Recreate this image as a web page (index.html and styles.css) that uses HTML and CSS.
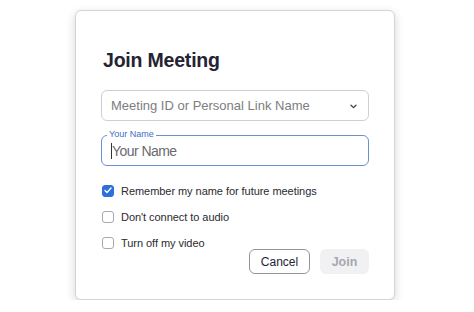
FILE: index.html
```html
<!DOCTYPE html>
<html lang="en">
<head>
<meta charset="utf-8">
<title>Join Meeting</title>
<link rel="stylesheet" href="styles.css">
</head>
<body>
<div class="stage">
  <div class="dialog">
    <h1 class="title">Join Meeting</h1>
    <div class="select">
      <span class="placeholder">Meeting ID or Personal Link Name</span>
      <svg class="chevron" width="7" height="5" viewBox="0 0 7 5"><path d="M1 1.2 L3.5 3.6 L6 1.2" fill="none" stroke="#444" stroke-width="1.3" stroke-linecap="round" stroke-linejoin="round"/></svg>
    </div>
    <div class="field">
      <span class="field-label">Your Name</span>
      <span class="caret"></span><span class="field-value">Your Name</span>
    </div>
    <div class="options">
      <div class="option">
        <span class="box checked"><svg width="8" height="7" viewBox="0 0 8 7"><path d="M1 3.6 L3 5.6 L7 1" fill="none" stroke="#fff" stroke-width="1.4" stroke-linecap="round" stroke-linejoin="round"/></svg></span>
        <span class="option-text">Remember my name for future meetings</span>
      </div>
      <div class="option">
        <span class="box"></span>
        <span class="option-text">Don't connect to audio</span>
      </div>
      <div class="option">
        <span class="box"></span>
        <span class="option-text">Turn off my video</span>
      </div>
    </div>
    <div class="actions">
      <button class="btn btn-cancel">Cancel</button>
      <button class="btn btn-join">Join</button>
    </div>
  </div>
</div>
</body>
</html>
```
FILE: styles.css
```css
html, body {
  margin: 0;
  padding: 0;
  background: #ffffff;
}
body {
  font-family: "Liberation Sans", Arial, sans-serif;
  color: #232333;
}
.stage {
  padding: 10px 0 0 75px;
}
.dialog {
  box-sizing: border-box;
  width: 320px;
  height: 290px;
  border: 1px solid #d4d4d6;
  border-radius: 6px;
  background: #fff;
  box-shadow: 0 3px 10px rgba(0, 0, 0, 0.17);
  padding: 37px 25px 0 25px;
}
.title {
  margin: 0 0 0 2px;
  font-size: 19.5px;
  line-height: 24px;
  font-weight: 700;
  color: #232333;
  letter-spacing: -0.2px;
}
.select {
  box-sizing: border-box;
  margin-top: 18px;
  height: 31px;
  border: 1px solid #cfcfd3;
  border-radius: 6px;
  display: flex;
  align-items: center;
  justify-content: space-between;
  padding: 0 11px 0 9px;
}
.placeholder {
  font-size: 13px;
  color: #7d7d80;
}
.chevron {
  display: block;
  margin-top: 1px;
}
.field {
  position: relative;
  box-sizing: border-box;
  margin-top: 14px;
  height: 31px;
  border: 1.5px solid #6c8fcf;
  border-radius: 6px;
  display: flex;
  align-items: center;
  padding: 0 9px;
}
.field-label {
  position: absolute;
  left: 5px;
  top: -7px;
  background: #fff;
  padding: 0 2px;
  font-size: 9px;
  line-height: 11px;
  color: #3f6fc4;
}
.caret {
  width: 1px;
  height: 16px;
  background: #333;
}
.field-value {
  font-size: 14px;
  color: #6a6a6e;
  letter-spacing: -0.55px;
}
.options {
  margin-top: 18px;
  display: flex;
  flex-direction: column;
  gap: 13px;
}
.option {
  height: 13px;
  display: flex;
  align-items: center;
  gap: 7px;
}
.box {
  box-sizing: border-box;
  width: 12px;
  height: 12px;
  margin-left: 1px;
  border: 1px solid #a9a9ad;
  border-radius: 3px;
  display: flex;
  align-items: center;
  justify-content: center;
  background: #fff;
}
.box.checked {
  background: #2d6fdb;
  border-color: #2d6fdb;
}
.option-text {
  font-size: 11px;
  color: #2a2a30;
  letter-spacing: -0.05px;
}
.actions {
  display: flex;
  justify-content: flex-end;
  gap: 10px;
}
.btn {
  box-sizing: border-box;
  height: 25px;
  border-radius: 6px;
  font-family: "Liberation Sans", Arial, sans-serif;
  padding: 0;
}
.btn-cancel {
  width: 61px;
  background: #fff;
  border: 1px solid #96969a;
  font-size: 12px;
  color: #232333;
}
.btn-join {
  width: 49px;
  background: #f1f1f4;
  border: none;
  font-size: 12.5px;
  font-weight: 700;
  color: #a7a7ae;
}
```
